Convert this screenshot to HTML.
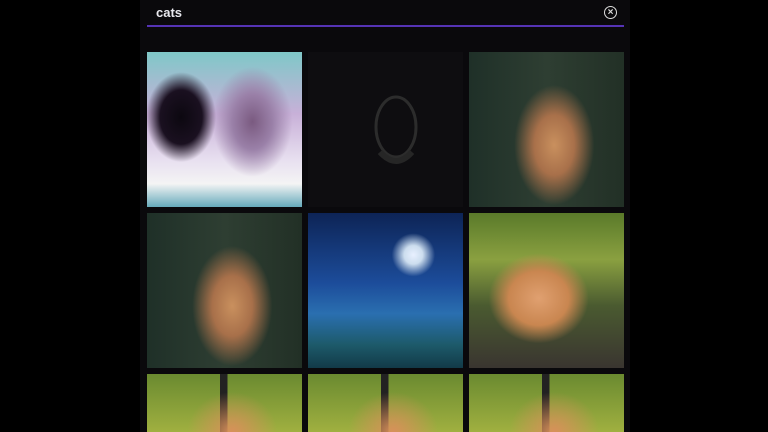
<!DOCTYPE html>
<html><head><style>
html,body{margin:0;width:768px;height:432px;background:#000;overflow:hidden;font-family:"Liberation Sans",sans-serif}
.col{position:absolute;left:140px;top:0;width:490px;height:432px;background:#0a090c}
.q{position:absolute;left:156px;top:5px;color:#e8e8ee;font-weight:bold;font-size:13px}
.line{position:absolute;left:147px;top:25px;width:477px;height:2px;background:#5533b5}
.x{position:absolute;left:604px;top:6px;width:11px;height:11px;border:1.5px solid #ddd;border-radius:50%;color:#ddd;font-size:10px;line-height:11px;text-align:center;font-weight:bold}
.t{position:absolute;width:155px;height:155px}
</style></head><body>
<div class="col"></div>
<div class="q">cats</div>
<div class="line"></div>
<div class="x">×</div>
<div class="t" style="left:147px;top:52px;background:radial-gradient(ellipse 35px 45px at 22% 42%,#0c0810 0,#1a1020 60%,transparent 100%),radial-gradient(ellipse 40px 55px at 68% 45%,#7a5a80 0,#9a80a8 50%,transparent 100%),linear-gradient(180deg,#7fc8c8 0,#c8b0d8 40%,#e8e0f0 70%,#f4f4f4 85%,#6ab)"></div>
<div class="t" style="left:308px;top:52px;background:#0e0d10">
<svg width="155" height="155"><ellipse cx="88" cy="75" rx="20" ry="30" fill="none" stroke="#2c2c2c" stroke-width="3"/><path d="M72 100 Q88 118 104 100" stroke="#262626" stroke-width="6" fill="none"/></svg></div>
<div class="t" style="left:469px;top:52px;background:radial-gradient(ellipse 40px 60px at 55% 60%,#c9905e 0,#a8704a 50%,transparent 100%),linear-gradient(90deg,#1f3028,#2e3e32 50%,#223026)"></div>
<div class="t" style="left:147px;top:213px;background:radial-gradient(ellipse 40px 60px at 55% 60%,#c9905e 0,#a8704a 50%,transparent 100%),linear-gradient(90deg,#1f3028,#2e3e32 50%,#223026)"></div>
<div class="t" style="left:308px;top:213px;background:radial-gradient(circle at 68% 27%,#e8f0ff 0,#cde 6%,transparent 14%),linear-gradient(180deg,#0d2456 0,#1c4c9a 45%,#2a6fb0 65%,#1d5a6a 85%,#123a48)"></div>
<div class="t" style="left:469px;top:213px;background:radial-gradient(ellipse 50px 45px at 45% 55%,#e0a070 0,#c98650 60%,transparent 100%),linear-gradient(180deg,#5a7a2a 0,#8aa040 30%,#4a5a30 60%,#3a3530 100%)"></div>
<div class="t" style="left:147px;top:374px;height:58px;background:radial-gradient(ellipse 45px 40px at 55% 100%,#d8905a 0,transparent 100%),linear-gradient(90deg,transparent 47%,#222 47%,#222 52%,transparent 52%),linear-gradient(180deg,#6a8a30,#a0b040)"></div>
<div class="t" style="left:308px;top:374px;height:58px;background:radial-gradient(ellipse 45px 40px at 55% 100%,#d8905a 0,transparent 100%),linear-gradient(90deg,transparent 47%,#222 47%,#222 52%,transparent 52%),linear-gradient(180deg,#6a8a30,#a0b040)"></div>
<div class="t" style="left:469px;top:374px;height:58px;background:radial-gradient(ellipse 45px 40px at 55% 100%,#d8905a 0,transparent 100%),linear-gradient(90deg,transparent 47%,#222 47%,#222 52%,transparent 52%),linear-gradient(180deg,#6a8a30,#a0b040)"></div>
</body></html>
